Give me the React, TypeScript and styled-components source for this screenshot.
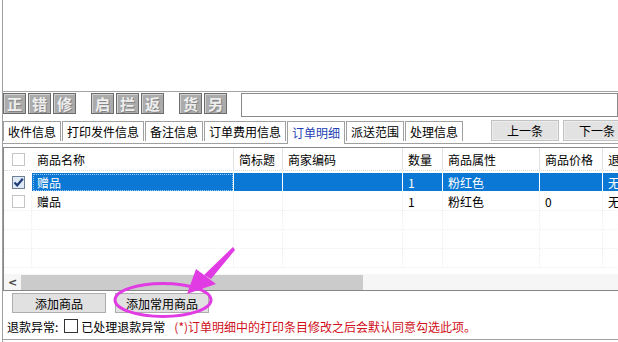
import styled, { createGlobalStyle } from "styled-components";

const GlobalStyle = createGlobalStyle`
  html, body {
    margin: 0;
    padding: 0;
    background: #fff;
  }
  body {
    font-family: "Noto Sans CJK SC", "Liberation Sans", sans-serif;
    font-size: 12px;
    color: #000;
  }
  * { box-sizing: border-box; }
`;

const Frame = styled.div`
  position: relative;
  width: 616px;
  height: 342px;
  margin-left: 2px;
  border-left: 1px solid #a0a0a0;
  display: flex;
  flex-direction: column;
  overflow: hidden;
`;

const TopPanel = styled.div`
  height: 92px;
  flex-shrink: 0;
  border-bottom: 1px solid #a4a4a4;
`;

const Toolbar = styled.div`
  height: 25px;
  flex-shrink: 0;
  display: flex;
  align-items: flex-start;
  gap: 15px;
  padding-top: 1px;
`;

const IconGroup = styled.div`
  display: flex;
  gap: 2px;
`;

const IconButton = styled.div`
  width: 23px;
  height: 21px;
  background: #ababab;
  border: 1px solid #6c6c6c;
  box-shadow: inset 1px 1px 0 #d2d2d2;
  display: flex;
  align-items: center;
  justify-content: center;
  font-size: 15px;
  font-weight: bold;
  color: #eeeeee;
  text-shadow: 1px 1px 0 #858585;
`;

const SearchInput = styled.div`
  flex: 1;
  height: 24px;
  margin-left: -1px;
  border: 1px solid #8a8a8a;
  background: #fff;
`;

const TabRow = styled.div`
  height: 27px;
  flex-shrink: 0;
  display: flex;
  align-items: flex-end;
  border-bottom: 1px solid #a0a0a0;
`;

const Tabs = styled.div`
  display: flex;
  gap: 1px;
`;

const Tab = styled.div<{ $active?: boolean }>`
  position: relative;
  height: ${(p) => (p.$active ? 23 : 20)}px;
  margin-bottom: ${(p) => (p.$active ? "-1px" : "0")};
  padding: 0 4px ${(p) => (p.$active ? 1 : 0)}px;
  border: 1px solid #a0a0a0;
  border-bottom: none;
  background: #fff;
  color: ${(p) => (p.$active ? "#1d3fb3" : "#000")};
  display: flex;
  align-items: center;
  white-space: nowrap;
`;

const NavButtons = styled.div`
  display: flex;
  gap: 4px;
  margin-left: 28px;
  margin-bottom: 2px;
`;

const NavButton = styled.div`
  width: 68px;
  height: 21px;
  flex-shrink: 0;
  background: #e2e2e2;
  border: 1px solid #c2c2c2;
  box-shadow: inset 0 0 0 1px #ececec;
  display: flex;
  align-items: center;
  justify-content: center;
`;

const Grid = styled.div`
  margin-top: 3px;
  height: 144px;
  width: 620px;
  flex-shrink: 0;
  border: 1px solid #868686;
  display: flex;
  flex-direction: column;
  overflow: hidden;
`;

const HeaderRow = styled.div`
  display: flex;
  height: 23px;
  margin-bottom: 2px;
  border-bottom: 1px dotted #d8d8d8;
`;

const Row = styled.div`
  display: flex;
  height: 19px;
`;

const widths = [28, 202, 49, 120, 40, 97, 63, 80];

const HeadCell = styled.div<{ $w: number; $first?: boolean }>`
  width: ${(p) => p.$w}px;
  flex-shrink: 0;
  display: flex;
  align-items: center;
  justify-content: ${(p) => (p.$first ? "center" : "flex-start")};
  padding-left: ${(p) => (p.$first ? 2 : 5)}px;
  border-right: 1px solid ${(p) => (p.$first ? "transparent" : "#e2e2e2")};
  white-space: nowrap;
  overflow: hidden;
`;

const Cell = styled.div<{ $w: number; $sel?: boolean; $first?: boolean; $focus?: boolean }>`
  width: ${(p) => p.$w}px;
  flex-shrink: 0;
  display: flex;
  align-items: center;
  justify-content: ${(p) => (p.$first ? "center" : "flex-start")};
  padding-left: ${(p) => (p.$first ? 2 : 5)}px;
  background: ${(p) => (p.$sel && !p.$first ? "#0a78d4" : "transparent")};
  color: ${(p) => (p.$sel && !p.$first ? "#fff" : "#000")};
  border-right: 1px ${(p) => (p.$sel ? "solid #fff" : "dotted #ececec")};
  border-bottom: 1px ${(p) => (p.$sel ? "solid #fff" : "dotted #efefef")};
  outline: ${(p) => (p.$focus ? "1px dotted #9cc8ef" : "none")};
  outline-offset: -2px;
  white-space: nowrap;
  overflow: hidden;
`;

const Spacer = styled.div`
  flex: 1;
`;

const Check = styled.span<{ $on?: boolean }>`
  width: 13px;
  height: 13px;
  display: inline-flex;
  align-items: center;
  justify-content: center;
  border: 1px solid ${(p) => (p.$on ? "#6f7f95" : "#c4c4c4")};
  background: ${(p) => (p.$on ? "#dfeaf7" : "#fff")};
`;

const ScrollBar = styled.div`
  height: 16px;
  flex-shrink: 0;
  display: flex;
  align-items: center;
  background: #f6f6f6;
`;

const ScrollArrow = styled.div`
  width: 17px;
  font-size: 11px;
  font-weight: bold;
  color: #444;
  text-align: center;
  font-family: "DejaVu Sans", sans-serif;
`;

const ScrollThumb = styled.div`
  width: 342px;
  height: 15px;
  background: #cbcbcb;
`;

const ActionRow = styled.div`
  display: flex;
  gap: 9px;
  padding-left: 9px;
  margin-top: 2px;
  flex-shrink: 0;
`;

const ActionButton = styled.div`
  width: 94px;
  height: 20px;
  background: #e1e1e1;
  border: 1px solid #adadad;
  display: flex;
  align-items: center;
  justify-content: center;
`;

const Footer = styled.div`
  height: 27px;
  flex-shrink: 0;
  display: flex;
  align-items: center;
  padding-left: 4px;
  border-bottom: 1px solid #a0a0a0;
  white-space: nowrap;
`;

const FooterBox = styled.span`
  width: 14px;
  height: 14px;
  border: 1px solid #333;
  background: #fff;
  margin: 0 3px 0 6px;
`;

const Notice = styled.span`
  margin-left: 9px;
  color: #d0101a;
`;

const Overlay = styled.svg`
  position: absolute;
  left: -3px;
  top: 0;
  pointer-events: none;
`;

const headers = ["", "商品名称", "简标题", "商家编码", "数量", "商品属性", "商品价格", "退款状态"];

const rows = [
  { sel: true, vals: ["", "赠品", "", "", "1", "粉红色", "", "无"] },
  { sel: false, vals: ["", "赠品", "", "", "1", "粉红色", "0", "无"] },
];

function CheckMark() {
  return (
    <svg width="11" height="11" viewBox="0 0 11 11">
      <path d="M1.5 5.5 L4.2 8.3 L9.8 1.8" fill="none" stroke="#1f3c78" strokeWidth="2.2" />
    </svg>
  );
}

export default function App() {
  return (
    <>
      <GlobalStyle />
      <Frame>
        <TopPanel />
        <Toolbar>
          <IconGroup>
            <IconButton>正</IconButton>
            <IconButton>错</IconButton>
            <IconButton>修</IconButton>
          </IconGroup>
          <IconGroup>
            <IconButton>启</IconButton>
            <IconButton>拦</IconButton>
            <IconButton>返</IconButton>
          </IconGroup>
          <IconGroup>
            <IconButton>货</IconButton>
            <IconButton>另</IconButton>
          </IconGroup>
          <SearchInput />
        </Toolbar>
        <TabRow>
          <Tabs>
            <Tab>收件信息</Tab>
            <Tab>打印发件信息</Tab>
            <Tab>备注信息</Tab>
            <Tab>订单费用信息</Tab>
            <Tab $active>订单明细</Tab>
            <Tab>派送范围</Tab>
            <Tab>处理信息</Tab>
          </Tabs>
          <NavButtons>
            <NavButton>上一条</NavButton>
            <NavButton>下一条</NavButton>
          </NavButtons>
        </TabRow>
        <Grid>
          <HeaderRow>
            {headers.map((h, i) => (
              <HeadCell key={i} $w={widths[i]} $first={i === 0}>
                {i === 0 ? <Check /> : h}
              </HeadCell>
            ))}
          </HeaderRow>
          {rows.map((r, ri) => (
            <Row key={ri}>
              {r.vals.map((v, i) => (
                <Cell key={i} $w={widths[i]} $sel={r.sel} $first={i === 0} $focus={r.sel && i === 1}>
                  {i === 0 ? <Check $on={r.sel}>{r.sel && <CheckMark />}</Check> : v}
                </Cell>
              ))}
            </Row>
          ))}
          {[0, 1, 2].map((k) => (
            <Row key={`e${k}`}>
              {widths.map((w, i) => (
                <Cell key={i} $w={w} $first={i === 0} />
              ))}
            </Row>
          ))}
          <Spacer />
          <ScrollBar>
            <ScrollArrow>&lt;</ScrollArrow>
            <ScrollThumb />
          </ScrollBar>
        </Grid>
        <ActionRow>
          <ActionButton>添加商品</ActionButton>
          <ActionButton>添加常用商品</ActionButton>
        </ActionRow>
        <Footer>
          退款异常:
          <FooterBox />
          已处理退款异常
          <Notice>(*)订单明细中的打印条目修改之后会默认同意勾选此项。</Notice>
        </Footer>
        <Overlay width="618" height="342" viewBox="0 0 618 342">
          <ellipse cx="163" cy="300" rx="48" ry="16.5" fill="none" stroke="#e13ce4" strokeWidth="3" />
          <polygon points="233,247 235,250 211,279 204,275" fill="#e13ce4" />
          <polygon points="187,294 196,269 216,284" fill="#e13ce4" />
        </Overlay>
      </Frame>
    </>
  );
}
